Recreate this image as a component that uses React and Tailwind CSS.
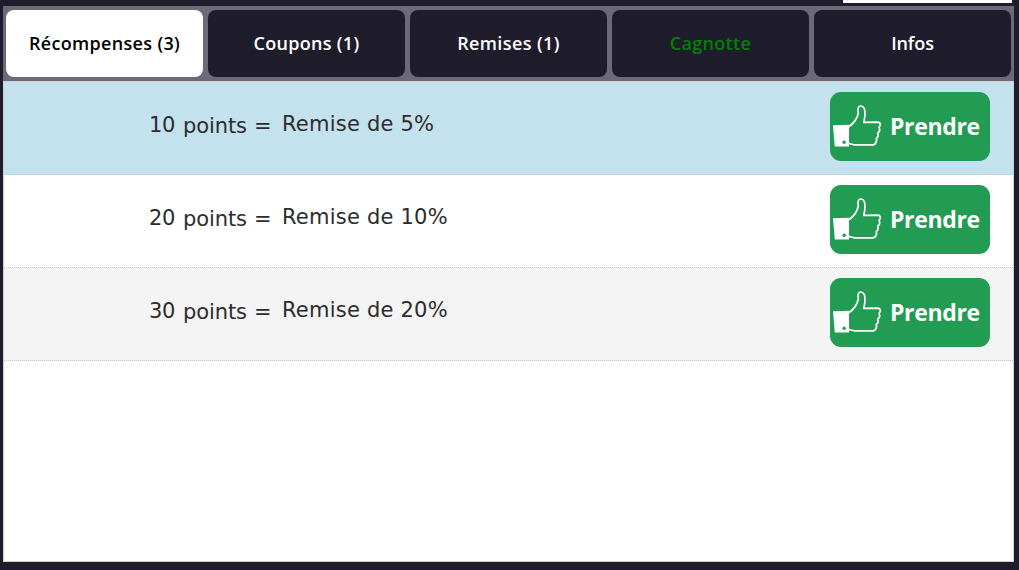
const tabs = [
  { label: 'Récompenses (3)', look: 'bg-white text-black tracking-[0.33px]' },
  { label: 'Coupons (1)', look: 'bg-[#1f1d2c] text-white tracking-[0.3px]' },
  { label: 'Remises (1)', look: 'bg-[#1f1d2c] text-white tracking-[0.4px]' },
  { label: 'Cagnotte', look: 'bg-[#1f1d2c] text-[#008000] tracking-[0.3px]' },
  { label: 'Infos', look: 'bg-[#1f1d2c] text-white tracking-[-0.1px]' },
];

const rewards = [
  { points: 10, label: 'Remise de 5%', look: 'bg-[#c4e1ee]' },
  { points: 20, label: 'Remise de 10%', look: 'bg-white' },
  { points: 30, label: 'Remise de 20%', look: 'bg-[#f4f4f4]' },
];

function ThumbIcon() {
  return (
    <svg className="h-[60px] w-[54px] shrink-0" viewBox="0 0 54 60" fill="none">
      <path d="M3 33.2 L19 32.7 L19 54.5 L4.8 54.5 Z" fill="white" />
      <circle cx="14.2" cy="50.3" r="1.7" fill="#229b53" />
      <path
        d="M18.5 35 C23 32 27.3 26.5 28.3 21 C27.6 16.5 28.2 14 30.8 14 C34 14.3 35.2 18 35 22 C34.9 25 34.3 27.5 33.8 30.3 L47.5 30.2 C51 30.5 51 33.7 49 35.3 C50.2 37.4 49.3 39.9 47.6 41.2 C48.6 43 48 45.2 46.3 46.5 C47 49 46 52.3 43.3 52.8 L24 52.8 C22.5 52.3 20.5 52 18.5 51.2"
        stroke="white" strokeWidth="1.7" strokeLinecap="round" strokeLinejoin="round"
      />
    </svg>
  );
}

export default function App() {
  return (
    <div className="flex h-[570px] w-[1019px] flex-col overflow-hidden bg-[#1f1d2c] pr-[5px] pl-[3px]">
      <div className="flex h-1.5 shrink-0 justify-end pr-0.5">
        <div className="h-[3px] w-[169px] bg-white" />
      </div>
      <nav className="flex h-[75px] shrink-0 gap-[5px] bg-[#6c6978] px-[3px] py-1">
        {tabs.map((t) => (
          <button key={t.label} className={`h-[67px] w-[197px] shrink-0 rounded-lg pb-px font-['Open_Sans',sans-serif] text-[18px] leading-[66px] font-semibold whitespace-nowrap ${t.look}`}>
            {t.label}
          </button>
        ))}
      </nav>
      <main className="h-[481px] shrink-0 border border-[#d0cfd3] bg-white">
        {rewards.map((r) => (
          <div key={r.points} className={`flex h-[93px] items-start justify-between border-b border-dotted border-[#c5c5c5] pt-2.5 pr-[23px] pl-[145px] ${r.look}`}>
            <div className="flex font-['DejaVu_Sans',sans-serif] text-[21px] leading-[26px] whitespace-nowrap text-[#2c2c2c]">
              <span className="w-[34px] pt-[20px] tracking-[-0.3px]">{r.points}</span>
              <span className="w-[71px] pt-[21px] tracking-[-0.1px]">points</span>
              <span className="w-[28px] pt-[21px]">=</span>
              <span className="pt-[19px] tracking-[0.22px]">{r.label}</span>
            </div>
            <button className="flex h-[69px] w-[160px] shrink-0 items-start rounded-[11px] bg-[#229b53] text-white">
              <ThumbIcon />
              <span className="pl-1.5 font-['Open_Sans',sans-serif] text-[23px] leading-[68px] font-bold tracking-[-0.35px]">Prendre</span>
            </button>
          </div>
        ))}
      </main>
    </div>
  );
}
